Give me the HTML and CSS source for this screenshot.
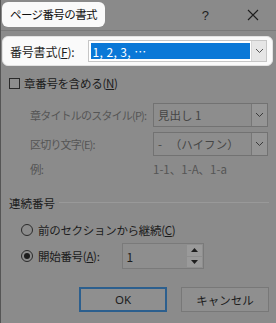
FILE: index.html
```html
<!DOCTYPE html>
<html lang="ja">
<head>
<meta charset="utf-8">
<link rel="stylesheet" href="styles.css">
</head>
<body>
<div class="dialog">
  <div class="titlebar">
    <div class="title-pill">ページ番号の書式</div>
    <div class="title-btns">
      <span class="help">?</span>
      <svg class="close" width="12" height="12" viewBox="0 0 12 12"><path d="M1 1L11 11M11 1L1 11" stroke="#1e1e1e" stroke-width="1.1" fill="none"/></svg>
    </div>
  </div>

  <div class="format-pill">
    <span class="label">番号書式(<u>F</u>):</span>
    <div class="select active">
      <div class="sel-value"><span>1, 2, 3, …</span></div>
      <div class="sel-arrow"><svg width="9" height="6" viewBox="0 0 9 6"><path d="M1 1L4.5 4.5L8 1" stroke="#555" stroke-width="1" fill="none"/></svg></div>
    </div>
  </div>

  <div class="content">
    <div class="check-row">
      <span class="checkbox"></span>
      <span class="text">章番号を含める(<u>N</u>)</span>
    </div>

    <div class="sub-grid">
      <span class="dis">章タイトルのスタイル(P):</span>
      <div class="select dim">
        <div class="sel-value">見出し 1</div>
        <div class="sel-arrow"><svg width="9" height="6" viewBox="0 0 9 6"><path d="M1 1L4.5 4.5L8 1" stroke="#3a3a3a" stroke-width="1" fill="none"/></svg></div>
      </div>
      <span class="dis">区切り文字(E):</span>
      <div class="select dim">
        <div class="sel-value">-&nbsp;&nbsp;&nbsp;（ハイフン）</div>
        <div class="sel-arrow"><svg width="9" height="6" viewBox="0 0 9 6"><path d="M1 1L4.5 4.5L8 1" stroke="#3a3a3a" stroke-width="1" fill="none"/></svg></div>
      </div>
      <span class="dis ex">例:</span>
      <span class="dis ex">1-1、1-A、1-a</span>
    </div>

    <div class="group-head">
      <span>連続番号</span>
      <span class="rule"></span>
    </div>

    <div class="radio-row">
      <span class="radio"></span>
      <span class="text">前のセクションから継続(<u>C</u>)</span>
    </div>
    <div class="radio-row start">
      <span class="radio on"></span>
      <span class="text">開始番号(<u>A</u>):</span>
      <div class="spin">
        <div class="spin-value">1</div>
        <div class="spin-btns">
          <span class="spin-btn"><svg width="7" height="4" viewBox="0 0 7 4"><path d="M0 4L3.5 0L7 4Z" fill="#1e1e1e"/></svg></span>
          <span class="spin-btn"><svg width="7" height="4" viewBox="0 0 7 4"><path d="M0 0L3.5 4L7 0Z" fill="#1e1e1e"/></svg></span>
        </div>
      </div>
    </div>

    <div class="buttons">
      <span class="btn ok">OK</span>
      <span class="btn">キャンセル</span>
    </div>
  </div>
</div>
</body>
</html>
```

FILE: styles.css
```css
html, body {
  margin: 0;
  padding: 0;
}
body {
  width: 276px;
  height: 323px;
  overflow: hidden;
  background: #8b8b8b;
  font-family: "Noto Sans CJK JP", "Noto Sans", sans-serif;
  font-size: 11px;
  color: #1c1c1c;
}
u { text-decoration: underline; text-underline-offset: 1px; }
.dialog {
  height: 323px;
  border-left: 1px solid #555;
  box-sizing: border-box;
}
.titlebar {
  height: 31px;
  display: flex;
  align-items: center;
  justify-content: space-between;
  background: #8a8a8a;
  border-bottom: 1px solid #7a7a7a;
  box-sizing: border-box;
}
.title-pill {
  margin-left: 1px;
  margin-top: -2px;
  height: 25px;
  width: 103px;
  box-sizing: border-box;
  padding-left: 8px;
  display: flex;
  align-items: center;
  background: #fafafa;
  border-radius: 6px;
  font-size: 11.5px;
  letter-spacing: -0.6px;
  color: #111;
}
.title-btns {
  display: flex;
  align-items: center;
  gap: 38px;
  padding-right: 17px;
}
.help {
  font-family: "Liberation Sans", sans-serif;
  font-size: 13px;
  color: #1e1e1e;
}
.format-pill {
  margin: 5px 3px 0 1px;
  height: 30px;
  box-sizing: border-box;
  background: #fafafa;
  border: 1px solid #e2e2e2;
  border-radius: 6px;
  display: flex;
  align-items: center;
  padding: 0 5px 0 7px;
  gap: 13px;
}
.label {
  font-size: 12px;
  letter-spacing: -0.2px;
  white-space: nowrap;
}
.select {
  flex: 1;
  height: 22px;
  display: flex;
  box-sizing: border-box;
  border: 1px solid #b8b8b8;
}
.select.active {
  background: #fff;
  border-color: #c6c6c6;
}
.select.active .sel-value {
  flex: 1;
  margin: 2px 1px 2px 2px;
  background: #0a78d7;
  color: #fff;
  display: flex;
  align-items: center;
  padding-left: 2px;
  font-size: 12px;
  letter-spacing: 0.4px;
}
.sel-arrow {
  width: 14px;
  display: flex;
  align-items: center;
  justify-content: center;
  background: #e6e6e6;
  border-left: 1px solid #d6d6d6;
}
.content {
  padding: 0 7px 0 8px;
}
.check-row {
  display: flex;
  align-items: center;
  gap: 4px;
  height: 26px;
  margin-top: 4px;
}
.checkbox {
  width: 11px;
  height: 11px;
  border: 1px solid #2a2a2a;
  box-sizing: border-box;
  background: #8e8e8e;
}
.text {
  font-size: 11.5px;
  letter-spacing: -0.3px;
  white-space: nowrap;
}
.sub-grid {
  display: grid;
  grid-template-columns: 123px 1fr;
  align-items: center;
  row-gap: 5px;
  padding-left: 21px;
  margin-top: 7px;
}
.dis {
  color: #555;
  font-size: 11px;
  letter-spacing: -0.8px;
  white-space: nowrap;
}
.select.dim {
  height: 24px;
  background: #8d8d8d;
  border-color: #727272;
  margin-right: 1px;
}
.select.dim .sel-value {
  flex: 1;
  display: flex;
  align-items: center;
  padding-left: 4px;
  color: #454545;
  font-size: 11.5px;
}
.select.dim .sel-arrow {
  width: 15px;
  background: #959595;
  border-left: 1px solid #777;
}
.ex {
  line-height: 14px;
  margin-top: 1px;
  font-size: 11.5px;
}
.ex + .ex { letter-spacing: 0; }
.group-head {
  display: flex;
  align-items: center;
  gap: 4px;
  margin-top: 19px;
  font-size: 11.5px;
}
.rule {
  flex: 1;
  height: 1px;
  background: #999;
  margin-top: -2px;
}
.radio-row {
  display: flex;
  align-items: center;
  gap: 5px;
  height: 22px;
  margin-top: 8px;
  padding-left: 12px;
}
.radio-row.start {
  margin-top: 2px;
  height: 26px;
}
.radio {
  width: 12px;
  height: 12px;
  border: 1px solid #2a2a2a;
  border-radius: 50%;
  box-sizing: border-box;
  display: flex;
  align-items: center;
  justify-content: center;
}
.radio.on::after {
  content: "";
  width: 6px;
  height: 6px;
  border-radius: 50%;
  background: #1c1c1c;
}
.spin {
  margin-left: 17px;
  width: 82px;
  height: 26px;
  display: flex;
  box-sizing: border-box;
  border: 1px solid #7a7a7a;
  background: #8e8e8e;
}
.spin-value {
  flex: 1;
  padding-left: 4px;
  display: flex;
  align-items: center;
  font-size: 12px;
}
.spin-btns {
  width: 15px;
  display: flex;
  flex-direction: column;
  gap: 1px;
  padding: 1px 1px 1px 0;
}
.spin-btn {
  flex: 1;
  background: #9a9a9a;
  display: flex;
  align-items: center;
  justify-content: center;
}
.buttons {
  display: flex;
  justify-content: flex-end;
  gap: 14px;
  margin-top: 18px;
}
.btn {
  width: 88px;
  height: 25px;
  box-sizing: border-box;
  border: 1px solid #787878;
  background: #8f8f8f;
  display: flex;
  align-items: center;
  justify-content: center;
  font-size: 11.5px;
}
.btn.ok {
  border: 2px solid #2c5f8e;
  font-family: "Noto Sans", sans-serif;
}
```
